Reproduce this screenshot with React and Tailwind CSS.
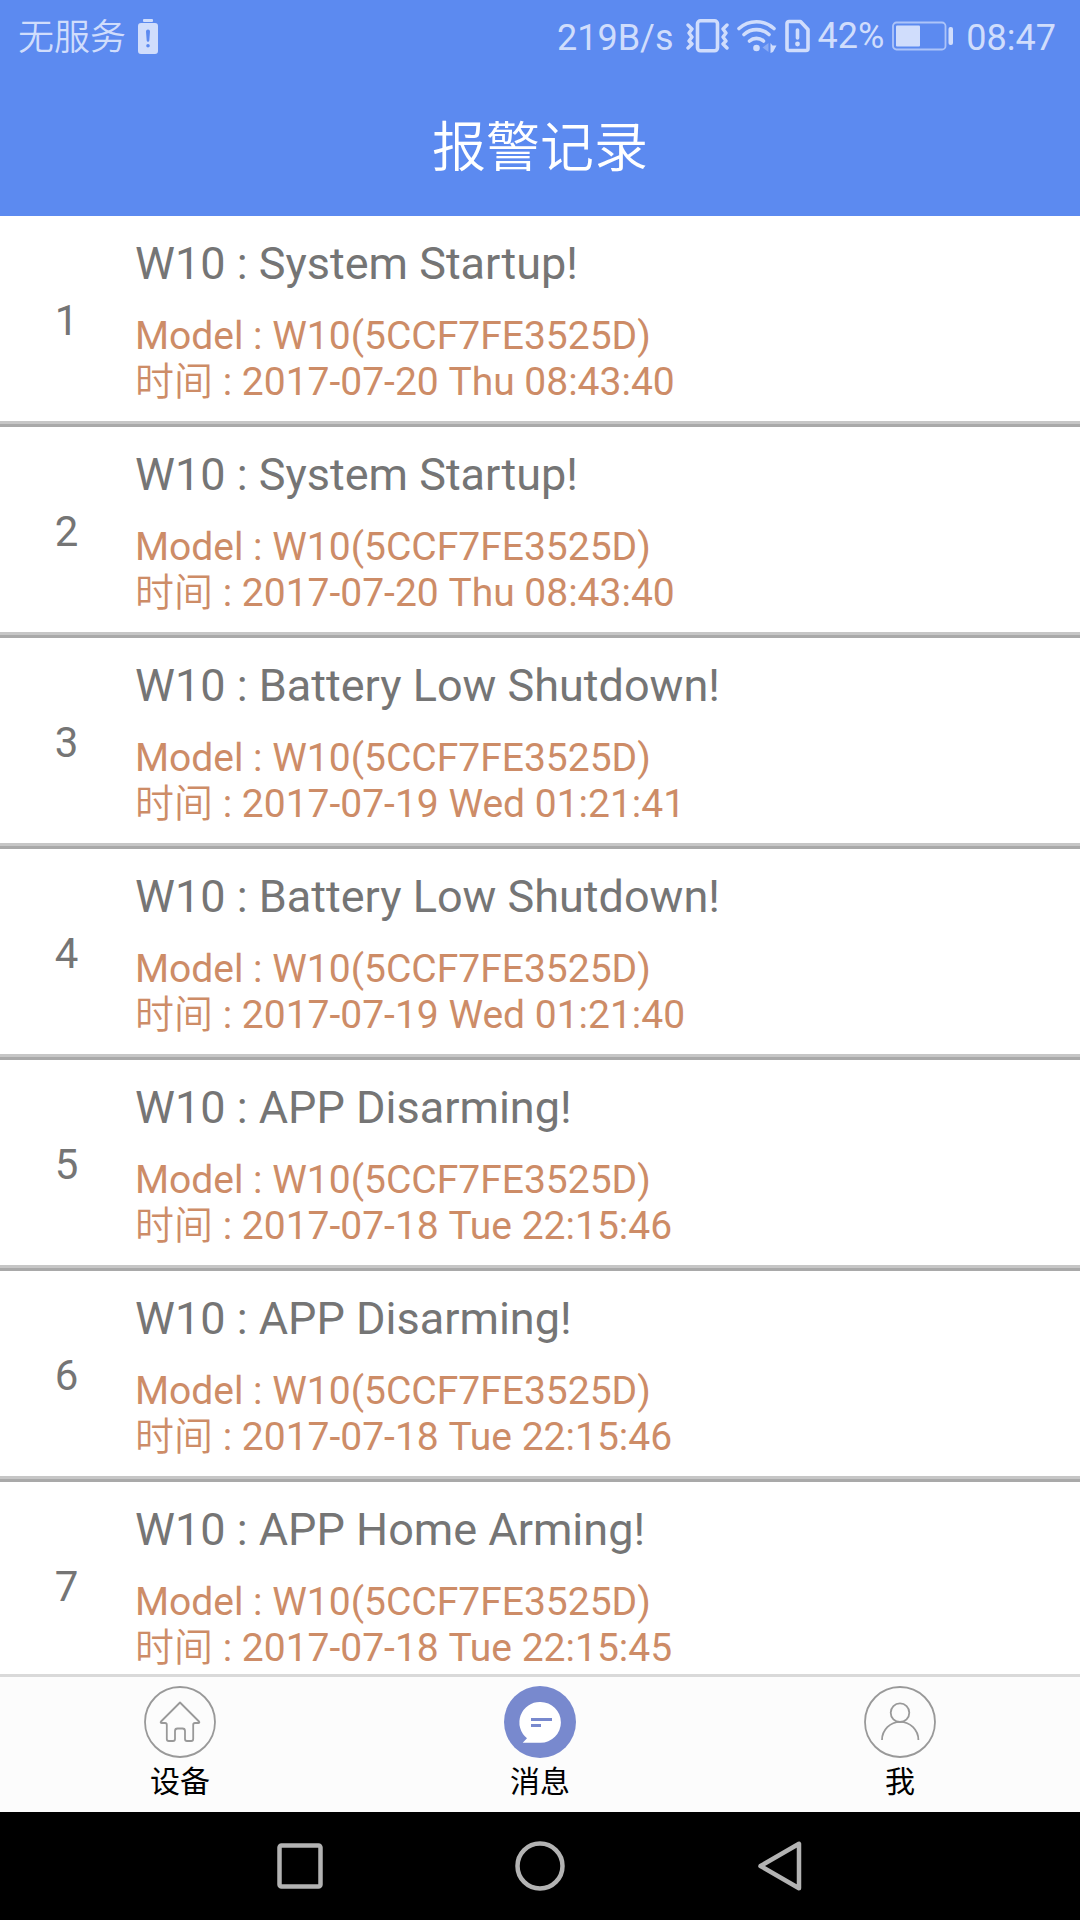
import { useState } from 'react';

const records = [
  { id: 1, event: 'System Startup!', time: '2017-07-20 Thu 08:43:40' },
  { id: 2, event: 'System Startup!', time: '2017-07-20 Thu 08:43:40' },
  { id: 3, event: 'Battery Low Shutdown!', time: '2017-07-19 Wed 01:21:41' },
  { id: 4, event: 'Battery Low Shutdown!', time: '2017-07-19 Wed 01:21:40' },
  { id: 5, event: 'APP Disarming!', time: '2017-07-18 Tue 22:15:46' },
  { id: 6, event: 'APP Disarming!', time: '2017-07-18 Tue 22:15:46' },
  { id: 7, event: 'APP Home Arming!', time: '2017-07-18 Tue 22:15:45' },
];

const BatteryAlertIcon = () => (
  <svg width="20" height="35" viewBox="0 0 20 35" fill="currentColor">
    <rect x="5" y="0" width="10" height="3" rx="1" />
    <path
      fillRule="evenodd"
      d="M3 4h14a3 3 0 0 1 3 3v25a3 3 0 0 1-3 3H3a3 3 0 0 1-3-3V7a3 3 0 0 1 3-3zM10 10.5a2 2 0 0 0-2 2l.7 9a1.3 1.3 0 0 0 2.6 0l.7-9a2 2 0 0 0-2-2zM10 25a1.8 1.8 0 1 0 0 3.6 1.8 1.8 0 0 0 0-3.6z"
    />
  </svg>
);

const VibrateIcon = () => (
  <svg width="43" height="34" viewBox="0 0 43 34" fill="none" stroke="currentColor" strokeLinecap="round" strokeLinejoin="round">
    <rect x="11.5" y="1.8" width="20" height="30" rx="3" strokeWidth="3.6" />
    <path strokeWidth="3.4" d="M2 6l4 4-3 4 3 4-3 4 3 3-4 4" />
    <path strokeWidth="3.4" d="M41 6l-4 4 3 4-3 4 3 4-3 3 4 4" />
  </svg>
);

const WifiIcon = () => (
  <svg width="40" height="34" viewBox="0 0 40 34" fill="none" stroke="currentColor" strokeWidth="3.6" strokeLinecap="round">
    <path d="M2 9.5a26 26 0 0 1 35 0" />
    <path d="M7 15.5a18.5 18.5 0 0 1 25 0" />
    <path d="M12.5 22a10.5 10.5 0 0 1 14 0" />
    <circle cx="19.5" cy="29" r="3.3" fill="currentColor" stroke="none" />
    <path d="M31.5 24v9L25.5 28.5z" fill="currentColor" stroke="none" opacity="0.4" />
    <path d="M33.5 24l2 2.5h4L36 33l-2.5 1z" fill="currentColor" stroke="none" />
  </svg>
);

const SimAlertIcon = () => (
  <svg width="25" height="34" viewBox="0 0 25 34" fill="none" stroke="currentColor" strokeWidth="3.6" strokeLinejoin="round" strokeLinecap="round">
    <path d="M4 2.5h11.5l7.5 8v19a2 2 0 0 1-2 2H4a2 2 0 0 1-2-2v-25a2 2 0 0 1 2-2z" />
    <path d="M12.5 11v8" />
    <circle cx="12.5" cy="25" r="2.4" fill="currentColor" stroke="none" />
  </svg>
);

const BatteryIcon = () => (
  <svg width="62" height="30" viewBox="0 0 62 30" fill="none">
    <rect x="1" y="1.5" width="52.5" height="27" rx="3.5" stroke="currentColor" strokeWidth="1.8" opacity="0.7" />
    <rect x="4" y="4.5" width="24" height="21" rx="1" fill="currentColor" />
    <rect x="56.5" y="6" width="4.5" height="18" rx="2" fill="currentColor" />
  </svg>
);

const HomeIcon = () => (
  <svg width="72" height="72" viewBox="0 0 72 72" fill="none" stroke="#999999" strokeWidth="1.8" strokeLinejoin="round">
    <circle cx="36" cy="36" r="35" />
    <path d="M36 16.5L17 35.5q-1 1.5.8 1.5h3.2q1.8 0 1.8 1.8V53q0 2 2 2h4.2q2 0 2-2v-8q0-2.5 2.5-2.5h5q2.5 0 2.5 2.5v8q0 2 2 2h4.2q2 0 2-2V38.800q0-1.800 1.800-1.800h3.200q1.800 0 .8-1.500z" />
  </svg>
);

const MessageIcon = () => (
  <svg width="72" height="72" viewBox="0 0 72 72">
    <circle cx="36" cy="36" r="36" fill="#7889CE" />
    <path d="M36.5 16a20.4 20.4 0 0 1 0 40.8H18.7l4.3-4.5A20.4 20.4 0 0 1 36.5 16z" fill="#ffffff" />
    <path d="M27 32h21v3H27zM27 38h10v3H27z" fill="#7889CE" />
  </svg>
);

const UserIcon = () => (
  <svg width="72" height="72" viewBox="0 0 72 72" fill="none" stroke="#999999" strokeWidth="1.8">
    <circle cx="36" cy="36" r="35" />
    <circle cx="36" cy="26.7" r="9.3" />
    <path d="M18 54a18.2 18.2 0 0 1 36.4 0" />
  </svg>
);

const tabs = [
  { key: 'devices', label: '设备', Icon: HomeIcon },
  { key: 'messages', label: '消息', Icon: MessageIcon },
  { key: 'me', label: '我', Icon: UserIcon },
];

const StatusBar = () => (
  <div className="flex h-[72px] items-center justify-between pt-1 pl-[18px] pr-6 text-[36px] leading-[42px] text-[#D0DDFC]">
    <div className="flex items-center gap-3 pb-1">
      <span className="pt-1 font-[350]">无服务</span>
      <BatteryAlertIcon />
    </div>
    <div className="flex items-center gap-3">
      <span>219B/s</span>
      <div className="flex items-center gap-2 pb-1">
        <VibrateIcon />
        <WifiIcon />
        <SimAlertIcon />
        <span>42%</span>
        <BatteryIcon />
      </div>
      <span>08:47</span>
    </div>
  </div>
);

const RecordRow = ({ record }) => (
  <li className="flex border-b-3 border-[#A9A9A9]">
    <div className="flex flex-1 border-b-3 border-[#C6C6C6]">
      <div className="flex w-[133px] shrink-0 items-center justify-center pt-1 text-[42px] leading-[50px] text-[#757575]">
        {record.id}
      </div>
      <div className="min-w-0 flex-1 pt-[21px] pb-4 pl-[2px]">
        <h2 className="text-[45px] leading-[53px] text-[#757575]">W10 : {record.event}</h2>
        <div className="mt-[23px] text-[39px] leading-[46px] text-[#CD8C67]">
          <p>Model : W10(5CCF7FE3525D)</p>
          <p>
            <span className="font-[350]">时间</span> : {record.time}
          </p>
        </div>
      </div>
    </div>
  </li>
);

const TabBar = ({ active, onChange }) => (
  <nav className="flex shrink-0 border-t-3 border-[#D9D9D9] bg-[#FCFCFC]">
    {tabs.map(({ key, label, Icon }) => (
      <button
        key={key}
        type="button"
        aria-current={active === key ? 'page' : undefined}
        onClick={() => onChange(key)}
        className="flex flex-1 flex-col items-center gap-[6px] pt-[9px] pb-3 text-[30px] leading-9 text-black"
      >
        <Icon />
        <span>{label}</span>
      </button>
    ))}
  </nav>
);

const SystemNav = () => (
  <div className="shrink-0 bg-black">
    <div className="mx-auto flex h-[108px] w-2/3 text-[#B3B3B3]">
      <button type="button" aria-label="Recent apps" className="flex flex-1 items-center justify-center">
        <svg width="50" height="50" viewBox="0 0 50 50" fill="none" stroke="currentColor" strokeWidth="4.5">
          <rect x="4.5" y="4.5" width="41" height="41" rx="2" />
        </svg>
      </button>
      <button type="button" aria-label="Home" className="flex flex-1 items-center justify-center">
        <svg width="50" height="50" viewBox="0 0 50 50" fill="none" stroke="currentColor" strokeWidth="4.5">
          <circle cx="25" cy="25" r="22.5" />
        </svg>
      </button>
      <button type="button" aria-label="Back" className="flex flex-1 items-center justify-center">
        <svg width="50" height="50" viewBox="0 0 50 50" fill="none" stroke="currentColor" strokeWidth="4.5" strokeLinejoin="round">
          <path d="M44 2.8v44.4L5.5 25z" />
        </svg>
      </button>
    </div>
  </div>
);

const App = () => {
  const [activeTab, setActiveTab] = useState('messages');

  return (
    <div className="flex h-screen flex-col bg-white font-[Roboto,'Noto_Sans_CJK_SC',sans-serif]">
      <header className="shrink-0 bg-[#5C8AF0]">
        <StatusBar />
        <h1 className="flex h-36 items-center justify-center pt-[10px] text-[54px] leading-[64px] font-[350] text-white">报警记录</h1>
      </header>
      <main className="min-h-0 flex-1 overflow-y-auto [scrollbar-width:none]">
        <ul>
          {records.map((record) => (
            <RecordRow key={record.id} record={record} />
          ))}
        </ul>
      </main>
      <TabBar active={activeTab} onChange={setActiveTab} />
      <SystemNav />
    </div>
  );
};

export default App;
